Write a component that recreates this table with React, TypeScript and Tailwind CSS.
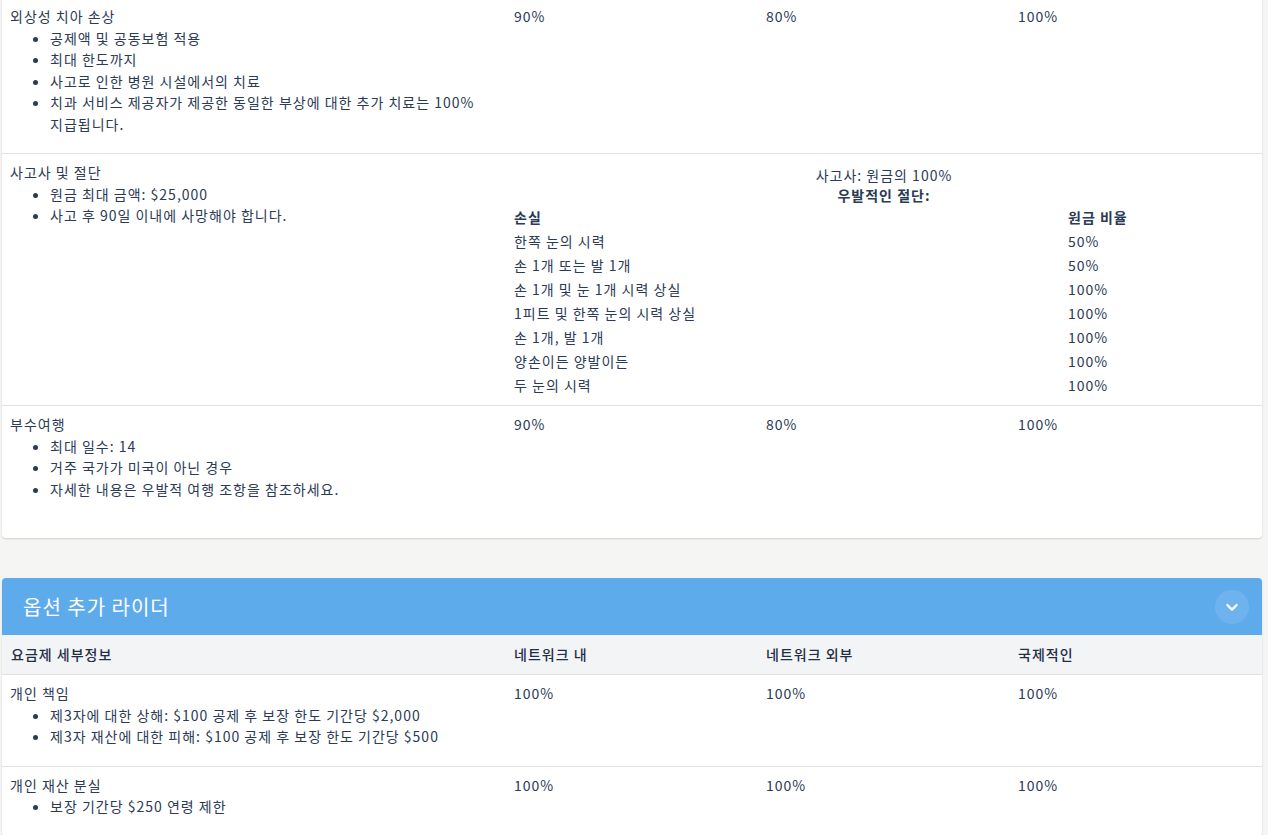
import React from "react";

const font = {
  fontFamily: '"Noto Sans CJK KR", "Noto Sans", sans-serif',
};

interface Row {
  title: string;
  bullets: string[];
  values?: string[];
}

const lossRows = [
  ["한쪽 눈의 시력", "50%"],
  ["손 1개 또는 발 1개", "50%"],
  ["손 1개 및 눈 1개 시력 상실", "100%"],
  ["1피트 및 한쪽 눈의 시력 상실", "100%"],
  ["손 1개, 발 1개", "100%"],
  ["양손이든 양발이든", "100%"],
  ["두 눈의 시력", "100%"],
];

const riderRows: Row[] = [
  {
    title: "개인 책임",
    bullets: [
      "제3자에 대한 상해: $100 공제 후 보장 한도 기간당 $2,000",
      "제3자 재산에 대한 피해: $100 공제 후 보장 한도 기간당 $500",
    ],
    values: ["100%", "100%", "100%"],
  },
  {
    title: "개인 재산 분실",
    bullets: ["보장 기간당 $250 연령 제한"],
    values: ["100%", "100%", "100%"],
  },
];

const PlanCell = ({ row }: { row: Row }) => (
  <div className="px-2 pt-2 pb-[10px]">
    <p>{row.title}</p>
    <ul className="list-disc pl-10 mb-2 pr-2">
      {row.bullets.map((b) => (
        <li key={b}>{b}</li>
      ))}
    </ul>
  </div>
);

const SimpleRow = ({ row, last }: { row: Row; last?: boolean }) => (
  <div
    className={`grid grid-cols-[40%_20%_20%_20%] ${
      last ? "" : "border-b border-[#e2e2e2]"
    }`}
  >
    <PlanCell row={row} />
    {row.values?.map((v, i) => (
      <div key={i} className="px-2 pt-2">
        {v}
      </div>
    ))}
  </div>
);

export default function App() {
  return (
    <div
      className="min-h-screen bg-[#f5f5f4] pl-[2px] pr-[6px] text-[14px] leading-[21.5px] tracking-[1px] break-keep text-[#2b3a55]"
      style={font}
    >
      {/* Top card (scrolled) */}
      <div className="-mt-[2px] bg-white rounded-b shadow-[0_1px_2px_rgba(0,0,0,0.15)] pb-5">
        <SimpleRow
          row={{
            title: "외상성 치아 손상",
            bullets: [
              "공제액 및 공동보험 적용",
              "최대 한도까지",
              "사고로 인한 병원 시설에서의 치료",
              "치과 서비스 제공자가 제공한 동일한 부상에 대한 추가 치료는 100% 지급됩니다.",
            ],
            values: ["90%", "80%", "100%"],
          }}
        />

        {/* accidental death row */}
        <div className="grid grid-cols-[40%_60%] border-b border-[#e2e2e2]">
          <PlanCell
            row={{
              title: "사고사 및 절단",
              bullets: ["원금 최대 금액: $25,000", "사고 후 90일 이내에 사망해야 합니다."],
            }}
          />
          <div className="px-2 pt-[10px] pb-[8px]">
            <p className="text-center mt-[1px] leading-[20px]">사고사: 원금의 100%</p>
            <p className="text-center font-bold leading-[20px]">우발적인 절단:</p>
            <div className="grid grid-cols-[554px_1fr]">
              <div className="font-bold leading-[24px]">손실</div>
              <div className="font-bold leading-[24px]">원금 비율</div>
              {lossRows.map(([a, b]) => (
                <React.Fragment key={a}>
                  <div className="leading-[24px]">{a}</div>
                  <div className="leading-[24px]">{b}</div>
                </React.Fragment>
              ))}
            </div>
          </div>
        </div>

        <SimpleRow
          last
          row={{
            title: "부수여행",
            bullets: [
              "최대 일수: 14",
              "거주 국가가 미국이 아닌 경우",
              "자세한 내용은 우발적 여행 조항을 참조하세요.",
            ],
            values: ["90%", "80%", "100%"],
          }}
        />
      </div>

      {/* Optional rider card */}
      <div className="mt-10 bg-white rounded shadow-[0_1px_2px_rgba(0,0,0,0.15)] overflow-hidden">
        <div className="h-[57px] bg-[#5eabec] flex items-center justify-between pl-[21px] pr-[13px]">
          <h2 className="text-white text-[20px]">옵션 추가 라이더</h2>
          <button className="w-[34px] h-[34px] rounded-full bg-white/10 flex items-center justify-center">
            <svg width="16" height="16" viewBox="0 0 24 24" fill="none" stroke="white" strokeWidth="3.5" strokeLinecap="round" strokeLinejoin="round">
              <path d="M5 9l7 7 7-7" />
            </svg>
          </button>
        </div>
        <div className="grid grid-cols-[40%_20%_20%_20%] h-10 items-center bg-[#f3f4f6] border-b border-[#e2e2e2] font-medium text-[#1f2d45]">
          <div className="px-2 pl-[9px]">요금제 세부정보</div>
          <div className="px-2">네트워크 내</div>
          <div className="px-2">네트워크 외부</div>
          <div className="px-2">국제적인</div>
        </div>
        {riderRows.map((r, i) => (
          <SimpleRow key={r.title} row={r} last={i === riderRows.length - 1} />
        ))}
      </div>
    </div>
  );
}
